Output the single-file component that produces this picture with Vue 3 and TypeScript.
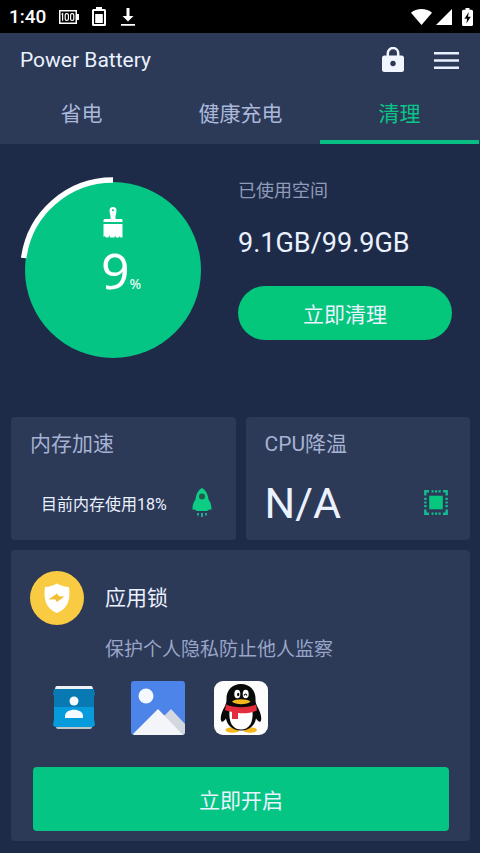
<script setup lang="ts">
import { ref } from 'vue'

const tabs: string[] = ['省电', '健康充电', '清理']
const active = ref(2)
const percent = 9
</script>

<template>
  <div class="screen">
    <div class="status">
      <span class="clock">1:40</span>
      <svg class="s-full" viewBox="0 0 20 14" aria-hidden="true">
        <rect x="0.75" y="0.75" width="16.5" height="12.5" fill="none" stroke="#fff" stroke-width="1.5" />
        <rect x="17.5" y="4" width="2.5" height="6" fill="#fff" />
        <path d="M2.6 4.5l1-.8v7" fill="none" stroke="#fff" stroke-width="1.2" />
        <rect x="6.2" y="3.6" width="3.2" height="6.8" rx="1.5" fill="none" stroke="#fff" stroke-width="1.2" />
        <rect x="11.6" y="3.6" width="3.2" height="6.8" rx="1.5" fill="none" stroke="#fff" stroke-width="1.2" />
      </svg>
      <svg class="s-cell" viewBox="0 0 14 19" aria-hidden="true">
        <path d="M4 0h6v2h2.5a1.5 1.5 0 0 1 1.5 1.5v14a1.5 1.5 0 0 1-1.5 1.5h-11a1.5 1.5 0 0 1-1.5-1.5v-14a1.5 1.5 0 0 1 1.5-1.5H4zM2 4v13h10V4z" fill="#fff" fill-rule="evenodd" />
        <rect x="3.2" y="7" width="7.6" height="9" fill="#fff" />
      </svg>
      <svg class="s-down" viewBox="0 0 14 18" aria-hidden="true">
        <path d="M5.5 0h3v8h4L7 13.5 1.500 8h4zM0 16h14v1.700H0z" fill="#fff" />
      </svg>
      <span class="space"></span>
      <svg class="s-wifi" viewBox="0 0 21 16" aria-hidden="true">
        <path d="M10.500 16L0 3.700C5.500-1.200 15.500-1.200 21 3.700z" fill="#fff" />
      </svg>
      <svg class="s-signal" viewBox="0 0 16 16" aria-hidden="true">
        <path d="M16 0v16H0z" fill="#fff" />
      </svg>
      <svg class="s-charge" viewBox="0 0 11 18" aria-hidden="true">
        <path d="M3.500 0h4v1.800H9.500A1.500 1.500 0 0 1 11 3.300v13.200A1.500 1.500 0 0 1 9.500 18h-8A1.500 1.500 0 0 1 0 16.500V3.300a1.500 1.500 0 0 1 1.500-1.500h2z" fill="#fff" />
        <path d="M6.800 4L2.400 10.800h2.700L4.400 15.600 8.800 8.800H6z" fill="#000" />
      </svg>
    </div>

    <header class="header">
      <div class="bar">
        <h1 class="title">Power Battery</h1>
        <button class="icon-btn" type="button" aria-label="应用锁">
          <svg class="lock" viewBox="0 0 22 27" aria-hidden="true">
            <path d="M5.800 9V6.200a5.200 5.200 0 0 1 10.400 0V9" fill="none" stroke="#f1f5ff" stroke-width="2.500" />
            <rect y="8.500" width="22" height="16.500" rx="2.500" fill="#f1f5ff" />
            <circle cx="11" cy="16.500" r="2.700" fill="#2c3957" />
          </svg>
        </button>
        <button class="icon-btn" type="button" aria-label="菜单">
          <svg class="menu" viewBox="0 0 25 17" aria-hidden="true">
            <path d="M0 1.300h25M0 8.500h25M0 15.700h25" stroke="#e9f0ff" stroke-width="2.600" />
          </svg>
        </button>
      </div>
      <nav class="tabs">
        <button
          v-for="(t, i) in tabs"
          :key="t"
          type="button"
          class="tab"
          :class="{ on: i === active }"
          @click="active = i"
        >{{ t }}</button>
      </nav>
    </header>

    <main>
      <section class="storage">
        <div class="gauge">
          <svg class="ring" viewBox="0 0 186 186" aria-hidden="true">
            <circle cx="93" cy="93" r="88" fill="#04c583" />
            <path d="M3.700 81A90 90 0 0 1 93 3" fill="none" stroke="#fff" stroke-width="5.500" />
          </svg>
          <div class="reading">
            <svg class="brush" viewBox="0 0 20 31" aria-hidden="true">
              <path d="M6.500 3.500a3.500 3.500 0 0 1 7 0c0 3-1 4-1 6v2.500h6q1 0 1 1.500v1.500H.500V13.500q0-1.500 1-1.500H7.500V9.500c0-2-1-3-1-6zM.500 17h19v13.500h-2l-.800-1.500-.700 1.500h-3l-1-2-.600 2H7l-.800-2.500L5.400 30.500H3L1.500 29l-1 1z" fill="#fff" />
              <circle cx="10" cy="3.300" r="1" fill="#04c583" />
            </svg>
            <div class="value"><span class="num">{{ percent }}</span><span class="unit">%</span></div>
          </div>
        </div>
        <div class="info">
          <p class="label">已使用空间</p>
          <p class="amount">9.1GB/99.9GB</p>
          <button class="pill" type="button">立即清理</button>
        </div>
      </section>

      <div class="cards">
        <section class="card small">
          <h2 class="card-title">内存加速</h2>
          <div class="row memory">
            <span>目前内存使用18%</span>
            <svg class="rocket" viewBox="0 0 20 30" aria-hidden="true">
              <path d="M10 0c3.500 1.800 6 6 6.500 11.500 2 2.400 3 5.500 3.100 10-2-.300-3.200.300-4.600 1.500H5c-1.400-1.200-2.600-1.800-4.600-1.500.100-4.500 1.100-7.600 3.100-10C4 6 6.500 1.800 10 0z" fill="#0dcc83" />
              <circle cx="10" cy="8.500" r="3" fill="#24574f" />
              <path d="M6 25v2.500M10 25v4M14 25v2.500" stroke="#28a696" stroke-width="2" />
            </svg>
          </div>
        </section>
        <section class="card small">
          <h2 class="card-title">CPU降温</h2>
          <div class="row">
            <span class="temp">N/A</span>
            <svg class="chip" viewBox="0 0 24 25" aria-hidden="true">
              <path d="M1.300 5.500V1.300H5M19 1.300h3.700V5.500M22.700 19.500v4.200H19M5 23.700H1.300V19.500" fill="none" stroke="#10bd91" stroke-width="2.400" />
              <path d="M7.500 1.400h2.200M11 1.400h2.200M14.500 1.400h2.200M7.500 23.600h2.200M11 23.600h2.200M14.500 23.600h2.200M1.400 7.700v2.200M1.400 11.400v2.200M1.400 15v2.200M22.600 7.700v2.200M22.600 11.400v2.200M22.600 15v2.200" stroke="#10bd91" stroke-width="2.400" />
              <rect x="5.200" y="5.700" width="13.600" height="13.600" fill="#06c77d" />
            </svg>
          </div>
        </section>
      </div>

      <section class="card lock-card">
        <div class="lock-head">
          <svg class="shield" viewBox="0 0 54 54" aria-hidden="true">
            <circle cx="27" cy="27" r="27" fill="#f9cb43" />
            <path d="M27 12.500c4 2.300 8 3.200 12 3.500 1.200 11 .5 20.500-12 26-12.500-5.500-13.200-15-12-26 4-.3 8-1.200 12-3.500z" fill="#fff" />
            <path d="M18.500 28.500l8.500-6 2 2.700 5.500.300-7.500 5.500-2-2.700z" fill="#f3bd35" />
          </svg>
          <h2 class="lock-title">应用锁</h2>
        </div>
        <p class="desc">保护个人隐私防止他人监察</p>
        <div class="apps">
          <svg class="contacts" viewBox="0 0 42 44" aria-hidden="true">
            <path d="M4 0h34q2 0 2 4H2q0-4 2-4z" fill="#eef1f3" />
            <path d="M3 39h36v2q0 2-2 2H5q-2 0-2-2z" fill="#bfc4c6" />
            <path d="M1 3h40l1 5-1 3v10H1V11L0 8z" fill="#0879b2" />
            <path d="M1 21h40v12l1 6-2 2H2l-2-2 1-6z" fill="#079bdc" />
            <circle cx="21" cy="15" r="4.500" fill="#f5faff" />
            <path d="M12 32v-2c0-8.500 18-8.500 18 0v2z" fill="#f5faff" />
          </svg>
          <svg class="photos" viewBox="0 0 54 54" aria-hidden="true">
            <rect width="54" height="54" rx="3" fill="#4d84e9" />
            <circle cx="15" cy="15" r="7.500" fill="#f4f8ff" />
            <path d="M32 36l8-8 14 15v8q0 3-3 3H30z" fill="#d3d7df" />
            <path d="M2 53l25-25L52 54H3z" fill="#f4f5f8" />
          </svg>
          <svg class="penguin" viewBox="0 0 54 54" aria-hidden="true">
            <rect width="54" height="54" rx="9" fill="#fdfdfd" />
            <ellipse cx="18.500" cy="49" rx="7" ry="2.800" fill="#f7b719" />
            <ellipse cx="36" cy="49" rx="7" ry="2.800" fill="#f7b719" />
            <path d="M27 3C17.500 3 12 10 12.500 19c0 3-1 4-1.500 6-3 5-5 11-4 14.500.700 2.500 3.200.500 5-2 1 6 6 12 15 12s14-6 15-12c1.800 2.500 4.300 4.500 5 2 1-3.500-1-9.500-4-14.500-.500-2-1.500-3-1.500-6C42 10 36.500 3 27 3z" fill="#080909" />
            <path d="M15.500 30h23c1 11-3 18.500-11.500 18.500S14.500 41 15.500 30z" fill="#fff" />
            <ellipse cx="23.300" cy="13" rx="3" ry="4.300" fill="#fff" />
            <ellipse cx="31.700" cy="13" rx="3" ry="4.300" fill="#fff" />
            <ellipse cx="24.200" cy="13.500" rx="1.200" ry="1.800" fill="#080909" />
            <path d="M30 14.500q1.500-3 3 0" fill="none" stroke="#080909" stroke-width="1.200" />
            <path d="M18 20.500c3-3 15-3 18.500 0-3 3.500-15.500 3.500-18.500 0z" fill="#f5b720" />
            <path d="M12 23.500c8 3.500 22 3.500 30 0l1 6c-5 2.200-12 3.200-19 2.500V38h-6v-7l-7-1.700z" fill="#e32c3c" />
          </svg>
        </div>
        <button class="open" type="button">立即开启</button>
      </section>
    </main>
  </div>
</template>

<style>
body {
  margin: 0;
  background: #1e2b48;
}
</style>

<style scoped>
.screen {
  min-height: 100vh;
  box-sizing: border-box;
  padding-bottom: 12px;
  background: #1e2b48;
  color: #eaf1ff;
  font-family: Roboto, 'Noto Sans CJK SC', sans-serif;
}
h1, h2, p {
  margin: 0;
  font-weight: 400;
}
button {
  border: 0;
  padding: 0;
  background: none;
  color: inherit;
  font: inherit;
  cursor: pointer;
}
svg {
  display: block;
  flex: none;
}
.status {
  display: flex;
  align-items: center;
  height: 33px;
  padding: 0 7px 0 9px;
  background: #000;
  color: #fff;
}
.clock {
  font-size: 19px;
  font-weight: 500;
  line-height: 33px;
}
.s-full { width: 20px; height: 14px; margin-left: 13px; }
.s-cell { width: 14px; height: 19px; margin-left: 13px; }
.s-down { width: 14px; height: 18px; margin-left: 15px; }
.space { flex: 1; }
.s-wifi { width: 21px; height: 16px; }
.s-signal { width: 16px; height: 16px; margin-left: 4px; }
.s-charge { width: 11px; height: 18px; margin-left: 10px; }
.header {
  background: #2c3957;
}
.bar {
  display: flex;
  align-items: center;
  gap: 30px;
  height: 54px;
  padding: 0 21px 0 20px;
}
.title {
  flex: 1;
  font-size: 21px;
  line-height: 30px;
}
.lock { width: 22px; height: 27px; }
.menu { width: 25px; height: 17px; }
.tabs {
  display: grid;
  grid-template-columns: repeat(3, 1fr);
  padding: 0 1px 0 2px;
}
.tab {
  height: 57px;
  padding-top: 1px;
  border-bottom: 4px solid transparent;
  color: #aab8da;
  font-size: 21px;
  line-height: 30px;
}
.tab.on {
  border-bottom-color: #08be83;
  color: #0bc487;
}
.storage {
  display: flex;
  align-items: flex-start;
  gap: 32px;
  padding: 33px 28px 54px 20px;
}
.gauge {
  display: grid;
  flex: none;
  width: 186px;
}
.ring, .reading {
  grid-area: 1 / 1;
}
.ring {
  width: 186px;
  height: 186px;
}
.reading {
  display: flex;
  flex-direction: column;
  align-items: center;
  padding-top: 30px;
  color: #fff;
}
.brush { width: 20px; height: 31px; }
.value {
  display: flex;
  align-items: baseline;
  padding-left: 16px;
  font-family: 'Noto Sans', sans-serif;
  line-height: 64px;
}
.num { font-size: 50px; }
.unit { font-size: 14px; }
.info {
  flex: 1;
  min-width: 0;
}
.label {
  color: #8f9bb9;
  font-size: 18px;
  line-height: 28px;
}
.amount {
  margin-top: 18px;
  font-size: 27px;
  line-height: 40px;
}
.pill {
  display: block;
  width: 100%;
  height: 54px;
  margin-top: 23px;
  border-radius: 27px;
  background: #04c77c;
  font-size: 21px;
}
.cards {
  display: grid;
  grid-template-columns: 1fr 1fr;
  gap: 10px;
  padding: 0 10px 0 11px;
}
.card {
  box-sizing: border-box;
  border-radius: 4px;
  background: #2c3957;
}
.small {
  padding: 12px 20px 0 19px;
}
.card-title {
  color: #a5b2d3;
  font-size: 21px;
  line-height: 30px;
}
.row {
  display: flex;
  align-items: center;
  justify-content: space-between;
  box-sizing: border-box;
  height: 81px;
  padding: 6px 2px 0 0;
}
.memory {
  padding: 6px 4px 0 11px;
  font-size: 16px;
}
.temp {
  font-size: 43px;
}
.rocket { width: 20px; height: 30px; }
.chip { width: 24px; height: 25px; }
.lock-card {
  margin: 10px 10px 0 11px;
  padding: 21px 21px 10px 22px;
}
.lock-head {
  display: flex;
  align-items: center;
  gap: 21px;
  margin-left: -3px;
}
.shield { width: 54px; height: 54px; }
.lock-title {
  font-size: 21px;
  line-height: 30px;
}
.desc {
  margin: 10px 0 0 72px;
  color: #98a5c8;
  font-size: 19px;
  line-height: 30px;
}
.apps {
  display: flex;
  align-items: center;
  margin: 16px 0 32px 20px;
}
.contacts { width: 42px; height: 44px; }
.photos { width: 54px; height: 54px; margin-left: 36px; }
.penguin { width: 54px; height: 54px; margin-left: 29px; }
.open {
  display: block;
  width: 100%;
  height: 64px;
  border-radius: 4px;
  background: #05c584;
  font-size: 21px;
}
</style>
